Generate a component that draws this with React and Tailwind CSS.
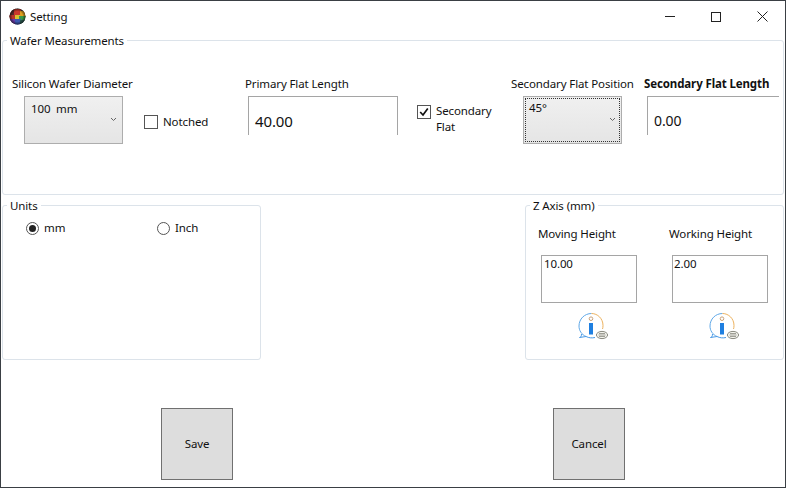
import React from "react";

const font = { fontFamily: '"Noto Sans", sans-serif' };

function WaferIcon() {
  return (
    <svg width="17" height="17" viewBox="0 0 17 17" className="shrink-0">
      <defs>
        <clipPath id="wc"><circle cx="8.5" cy="8.5" r="8" /></clipPath>
        <radialGradient id="wd"><stop offset="0.6" stopColor="#000" stopOpacity="0" /><stop offset="1" stopColor="#111" stopOpacity="0.7" /></radialGradient>
      </defs>
      <g clipPath="url(#wc)">
        <rect width="17" height="17" fill="#444" />
        <rect x="0" y="0" width="7" height="8" fill="#5a2a2a" />
        <rect x="5" y="1" width="7" height="7" fill="#c9382c" />
        <rect x="11" y="3" width="6" height="6" fill="#e0a020" />
        <rect x="0" y="7" width="6" height="5" fill="#b8342a" />
        <rect x="6" y="7" width="5" height="4" fill="#d8c030" />
        <rect x="10" y="8" width="7" height="4" fill="#3a9a48" />
        <rect x="1" y="11" width="6" height="6" fill="#6a3aa8" />
        <rect x="6" y="11" width="6" height="6" fill="#3c58b0" />
        <rect x="11" y="12" width="6" height="5" fill="#2a5a50" />
        <circle cx="8.5" cy="8.5" r="8.5" fill="url(#wd)" />
      </g>
    </svg>
  );
}

function InfoIcon() {
  return (
    <svg width="32" height="30" viewBox="0 0 32 30" className="block">
      <path d="M9 25.5C4.5 23.5 2 19.5 2 15C2 8 7.5 2.5 14.5 2.5" fill="none" stroke="#5fa8e8" strokeWidth="1" />
      <path d="M14.5 2.5C20.5 2.5 26 7.5 26 14.5C26 16 25.8 17 25.5 18" fill="none" stroke="#edb25e" strokeWidth="1" />
      <path d="M9 25.5L2.5 26.5C4 26 4.5 25 4.5 23M9 25.5C12 27 15 27.2 18 26.5" fill="none" stroke="#4a9ae6" strokeWidth="1" />
      <circle cx="14" cy="7.7" r="1.8" fill="none" stroke="#c9a27a" strokeWidth="1" />
      <rect x="12" y="12" width="4" height="11.5" fill="#1f7fe0" />
      <ellipse cx="25" cy="24" ry="3.6" rx="5.6" fill="#f4f4ee" stroke="#8a8a80" strokeWidth="1" />
      <path d="M22 22.5H28M21.5 24H28.5M22 25.5H28" stroke="#8a8a80" strokeWidth="0.8" />
    </svg>
  );
}

function Chevron() {
  return (
    <svg width="7" height="5" viewBox="0 0 7 5" className="block">
      <path d="M1 1L3.5 3.5L6 1" fill="none" stroke="#666" strokeWidth="1" />
    </svg>
  );
}

function Combo({ text, focused, className }) {
  return (
    <div className={`relative h-12 border border-[#adadad] bg-gradient-to-b from-[#f0f0f0] to-[#e5e5e5] ${className}`}>
      {focused && <div className="absolute inset-px border border-dotted border-[#333]" />}
      <div className={`leading-4 text-[#111] ${focused ? "pl-[5px] pt-[3px]" : "pl-[6px] pt-[4px]"}`}>{text}</div>
      <div className="absolute right-[5px] top-[20px]"><Chevron /></div>
    </div>
  );
}

function Group({ title, className, children }) {
  return (
    <section className={`relative rounded-[3px] border border-[#dce3ea] ${className}`}>
      <span className="absolute left-[4px] top-[-8px] bg-white px-[3px] leading-4 text-[#111]">{title}</span>
      {children}
    </section>
  );
}

export default function App() {
  return (
    <div className="flex h-[488px] w-[786px] flex-col overflow-hidden border border-[#3a3f44] bg-white text-[11.5px] tracking-[-0.12px]" style={font}>
      <header className="flex h-[31px] shrink-0 items-center pl-[8px]">
        <WaferIcon />
        <span className="ml-[4px] text-[#111]">Setting</span>
        <div className="ml-auto flex items-center">
          <div className="flex h-[31px] w-[46px] items-center justify-center">
            <div className="h-px w-[10px] bg-[#222]" />
          </div>
          <div className="flex h-[31px] w-[46px] items-center justify-center">
            <div className="h-[10px] w-[10px] border border-[#222]" />
          </div>
          <div className="flex h-[31px] w-[46px] items-center justify-center">
            <svg width="11" height="11" viewBox="0 0 11 11"><path d="M0.5 0.5L10.5 10.5M10.5 0.5L0.5 10.5" stroke="#222" strokeWidth="1" /></svg>
          </div>
        </div>
      </header>

      <main className="flex flex-1 flex-col pl-[1px]">
        <Group title="Wafer Measurements" className="mt-[8px] flex h-[155px] w-[782px] shrink-0 items-start pt-[35px]">
          <div className="ml-[9px] flex w-[122px] flex-col">
            <div className="h-[20px] leading-4 whitespace-nowrap text-[#111]">Silicon Wafer Diameter</div>
            <Combo text="100  mm" className="ml-[12px] w-[99px] whitespace-pre" />
          </div>
          <label className="ml-[10px] mt-[38px] flex w-[65px] items-center">
            <span className="h-[14px] w-[14px] border border-[#555]" />
            <span className="ml-[5px] leading-4 text-[#111]">Notched</span>
          </label>
          <div className="ml-[36px] flex w-[153px] flex-col">
            <div className="h-[20px] leading-4 whitespace-nowrap text-[#111]">Primary Flat Length</div>
            <div className="ml-[3px] h-[39px] w-[150px] border-x border-t border-[#a5a5a5] pl-[6px] pt-[14px] text-[15px] leading-5 text-[#111]">40.00</div>
          </div>
          <div className="ml-[19px] mt-[27px] flex w-[80px] items-start">
            <span className="mt-[2px] flex h-[14px] w-[14px] shrink-0 items-center justify-center border border-[#555]">
              <svg width="10" height="10" viewBox="0 0 10 10"><path d="M1.2 5L4 8L8.8 1.5" fill="none" stroke="#111" strokeWidth="1.7" /></svg>
            </span>
            <span className="ml-[5px] leading-4 text-[#111]">Secondary Flat</span>
          </div>
          <div className="ml-[14px] flex w-[133px] flex-col">
            <div className="h-[20px] leading-4 whitespace-nowrap text-[#111]">Secondary Flat Position</div>
            <Combo text="45°" focused className="ml-[12px] w-[99px]" />
          </div>
          <div className="flex flex-col">
            <div className="h-[20px] font-bold leading-4 whitespace-nowrap text-[#111]">Secondary Flat Length</div>
            <div className="ml-[3px] h-[39px] w-[132px] border-l border-t border-[#a5a5a5] pl-[6px] pt-[14px] text-sm leading-5 text-[#111]">0.00</div>
          </div>
        </Group>

        <div className="mt-[10px] flex w-[782px] justify-between">
          <Group title="Units" className="h-[155px] w-[259px]">
            <div className="flex pl-[23px] pt-[14px] leading-4 text-[#111]">
              <label className="flex w-[131px] items-center">
                <span className="flex h-[13px] w-[13px] items-center justify-center rounded-full border border-[#555]">
                  <span className="h-[7px] w-[7px] rounded-full bg-[#222]" />
                </span>
                <span className="ml-[5px]">mm</span>
              </label>
              <label className="flex items-center">
                <span className="h-[13px] w-[13px] rounded-full border border-[#555]" />
                <span className="ml-[5px]">Inch</span>
              </label>
            </div>
          </Group>

          <Group title="Z Axis (mm)" className="h-[155px] w-[259px]">
            <div className="flex pl-[12px] pt-[20px]">
              <div className="flex w-[131px] flex-col">
                <div className="h-[29px] leading-4 text-[#111]">Moving Height</div>
                <div className="ml-[3px] h-[48px] w-[96px] border border-[#a5a5a5] pl-[2px] leading-4 text-[#111]">10.00</div>
                <div className="ml-[39px] mt-[8px]"><InfoIcon /></div>
              </div>
              <div className="flex flex-col">
                <div className="h-[29px] leading-4 text-[#111]">Working Height</div>
                <div className="ml-[3px] h-[48px] w-[96px] border border-[#a5a5a5] pl-[1px] leading-4 text-[#111]">2.00</div>
                <div className="ml-[39px] mt-[8px]"><InfoIcon /></div>
              </div>
            </div>
          </Group>
        </div>

        <footer className="mt-[48px] flex">
          <button className="ml-[159px] h-[72px] w-[72px] border border-[#707070] bg-[#dddddd] text-[#111]">Save</button>
          <button className="ml-[320px] h-[72px] w-[72px] border border-[#707070] bg-[#dddddd] text-[#111]">Cancel</button>
        </footer>
      </main>
    </div>
  );
}
